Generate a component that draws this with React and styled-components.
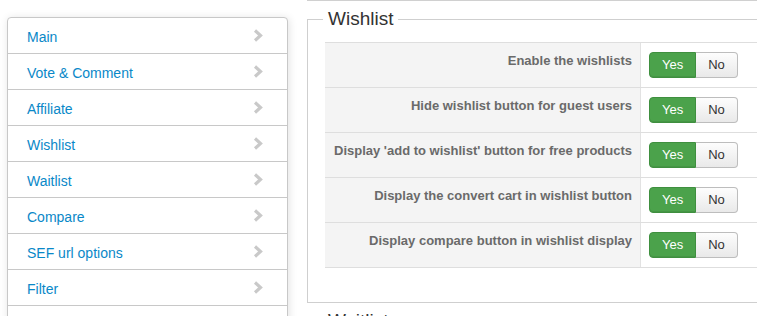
import React from "react";
import styled, { createGlobalStyle } from "styled-components";

const GlobalStyle = createGlobalStyle`
  html, body {
    margin: 0;
    padding: 0;
    background: #fff;
    overflow: hidden;
    font-family: "Liberation Sans", Arial, sans-serif;
  }
  * { box-sizing: border-box; }
`;

const Page = styled.div`
  display: flex;
  align-items: flex-start;
  gap: 19px;
  padding-left: 7px;
  width: 100vw;
  height: 316px;
  overflow: hidden;
`;

const Sidebar = styled.ul`
  flex: 0 0 281px;
  margin: 17px 0 0;
  padding: 0 0 40px;
  list-style: none;
  border: 1px solid #c8c8c8;
  border-radius: 4px;
  background: #fff;
  box-shadow: 1px 1px 8px rgba(0, 0, 0, 0.12);
`;

const NavItem = styled.li`
  display: flex;
  align-items: center;
  justify-content: space-between;
  height: 36px;
  padding: 0 24px 0 19px;
  border-bottom: 1px solid #c8c8c8;
`;

const NavLink = styled.a`
  margin-top: 2px;
  font-size: 14px;
  line-height: 20px;
  color: #0a88c8;
  text-decoration: none;
  cursor: pointer;
`;

const Chevron = () => (
  <svg width="10" height="13" viewBox="0 0 10 13" aria-hidden="true">
    <polyline
      points="2,1.5 7.5,6.5 2,11.5"
      fill="none"
      stroke="#c9c9c9"
      strokeWidth="3.2"
    />
  </svg>
);

const Main = styled.div`
  flex: 0 0 720px;
  display: flex;
  flex-direction: column;
`;

const TopRule = styled.div`
  height: 1px;
  border-top: 1px solid #d0d0d0;
`;

const Fieldset = styled.fieldset`
  margin: ${(p) => p.$top}px 0 0;
  padding: 11px 17px 34px;
  border: 1px solid #cfcfcf;
  min-width: 0;
`;

const Legend = styled.legend`
  margin-left: -2px;
  padding: 0 5px;
  font-size: 19px;
  line-height: 24px;
  color: #333;
  font-weight: normal;
`;

const SettingsTable = styled.div`
  display: flex;
  flex-direction: column;
  border-top: 1px solid #dedede;
`;

const Row = styled.div`
  display: flex;
  border-bottom: 1px solid #dedede;
`;

const Label = styled.div`
  flex: 0 0 316px;
  padding: 9px 8px 0 4px;
  background: #f4f4f4;
  border-right: 1px solid #e2e2e2;
  text-align: right;
  white-space: nowrap;
  font-size: 13px;
  line-height: 18px;
  font-weight: bold;
  color: #6a6a6a;
`;

const Control = styled.div`
  flex: 1;
  padding: 9px 8px;
  display: flex;
`;

const ToggleGroup = styled.div`
  display: flex;
`;

const ToggleButton = styled.button`
  height: 26px;
  padding: 3px 12px;
  font-family: "Liberation Sans", Arial, sans-serif;
  font-size: 13px;
  line-height: 18px;
  cursor: pointer;
  ${(p) =>
    p.$active
      ? `
    color: #fff;
    background: #4ba24b;
    border: 1px solid #3f8f3f;
    border-radius: 4px 0 0 4px;
    box-shadow: inset 0 -1px 0 rgba(0,0,0,0.08);
  `
      : `
    color: #333;
    background: linear-gradient(#fdfdfd, #e9e9e9);
    border: 1px solid #bdbdbd;
    border-left: none;
    border-radius: 0 4px 4px 0;
  `}
`;

const navItems = [
  "Main",
  "Vote & Comment",
  "Affiliate",
  "Wishlist",
  "Waitlist",
  "Compare",
  "SEF url options",
  "Filter",
];

const settings = [
  "Enable the wishlists",
  "Hide wishlist button for guest users",
  "Display 'add to wishlist' button for free products",
  "Display the convert cart in wishlist button",
  "Display compare button in wishlist display",
];

export default function App() {
  return (
    <>
      <GlobalStyle />
      <Page>
        <Sidebar>
          {navItems.map((item) => (
            <NavItem key={item}>
              <NavLink>{item}</NavLink>
              <Chevron />
            </NavItem>
          ))}
        </Sidebar>
        <Main>
          <TopRule />
          <Fieldset $top={6}>
            <Legend>Wishlist</Legend>
            <SettingsTable>
              {settings.map((s) => (
                <Row key={s}>
                  <Label>{s}</Label>
                  <Control>
                    <ToggleGroup>
                      <ToggleButton $active>Yes</ToggleButton>
                      <ToggleButton>No</ToggleButton>
                    </ToggleGroup>
                  </Control>
                </Row>
              ))}
            </SettingsTable>
          </Fieldset>
          <Fieldset $top={6}>
            <Legend>Waitlist</Legend>
          </Fieldset>
        </Main>
      </Page>
    </>
  );
}
